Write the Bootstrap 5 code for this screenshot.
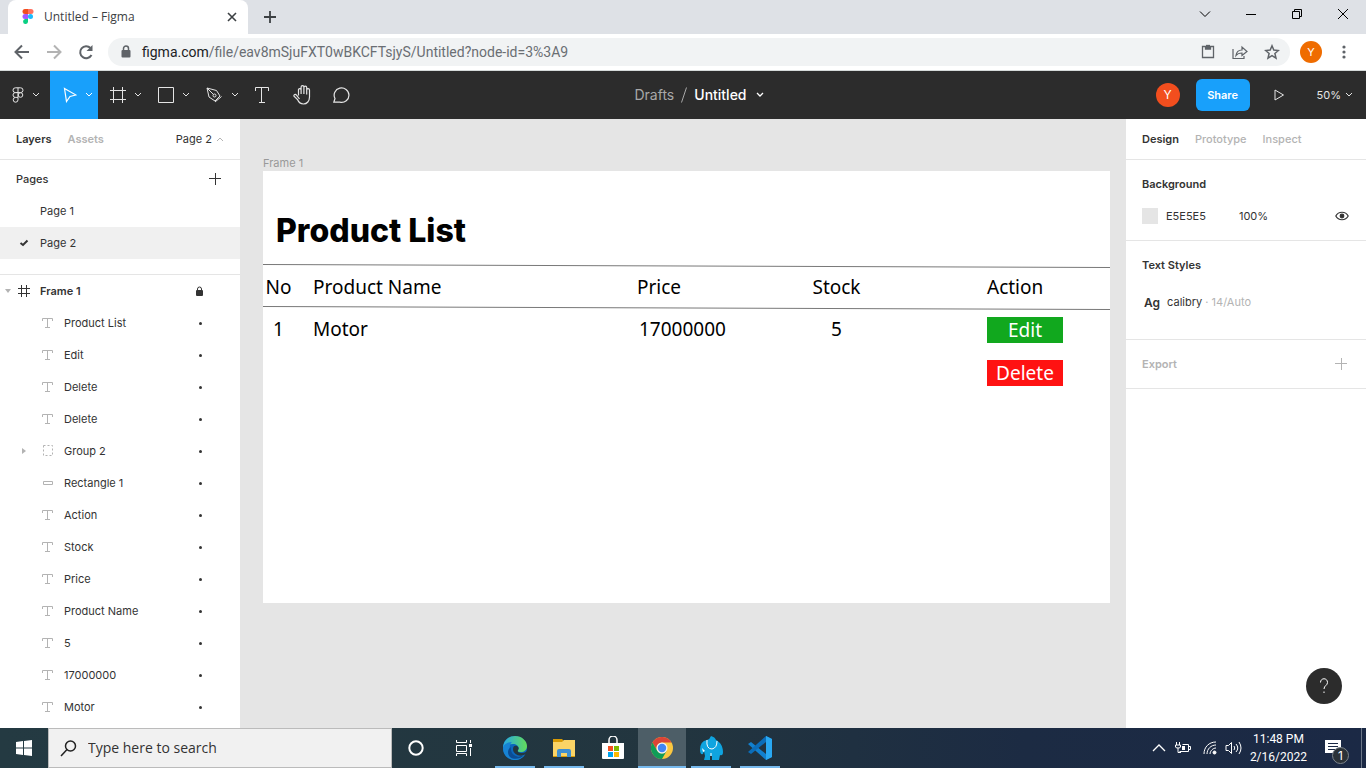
<!DOCTYPE html>
<html lang="en">
<head>
<meta charset="utf-8">
<meta name="viewport" content="width=device-width, initial-scale=1">
<title>Untitled – Figma</title>
<link href="https://cdn.jsdelivr.net/npm/bootstrap@5.3.0/dist/css/bootstrap.min.css" rel="stylesheet">
<style>
  body { font-family: Inter, "Liberation Sans", sans-serif; font-size: 11px; line-height: 16px; color: #333; background: #fff; }
  button { border: 0; background: none; padding: 0; color: inherit; font: inherit; }
  a { color: inherit; text-decoration: none; }
  svg { display: block; flex: none; }
  .ln { fill: none; stroke: currentColor; }

  /* browser chrome */
  .tabstrip { height: 34px; background: #dee1e6; padding-left: 8px; color: #3c4043; font: 12px/16px "Open Sans", "Noto Sans", sans-serif; }
  .browser-tab { width: 240px; height: 34px; background: #fff; border-radius: 8px 8px 0 0; padding: 0 10px 0 14px; gap: 10px; }
  .win-btn { width: 46px; height: 28px; color: #000; }
  .urlbar { height: 37px; border-bottom: 1px solid #d5dad9; color: #5f6368; padding: 0 14px 0 6px; }
  .nav-btn { width: 32px; height: 32px; }
  .omnibox { height: 28px; border-radius: 14px; background: #f1f3f4; padding: 0 10px 0 12px; margin-left: 6px; gap: 10px; }
  .address { font: 14px/20px Roboto, "Noto Sans", sans-serif; outline: 0; color: #6a6e73; }
  .address b { font-weight: 400; color: #202124; }
  .avatar { border-radius: 50%; color: #fff; }
  .avatar-browser { width: 22px; height: 22px; background: #ef6c00; font-size: 11px; margin: 0 10px; }

  /* editor toolbar */
  .toolbar { height: 48px; background: #2c2c2c; color: #e5e5e5; }
  .tool { height: 48px; width: 48px; padding-left: 8px; }
  .tool-wide { width: 50px; padding-left: 2px; }
  .tool-narrow { width: 40px; padding-left: 0; }
  .tool-on { background: #18a0fb; color: #fff; }
  .doc-title { font-size: 14px; line-height: 20px; padding-left: 46px; gap: 7px; }
  .dim { color: #a8a8a8; }
  .tool-end { padding-right: 13px; }
  .share-btn { width: 54px; height: 32px; border-radius: 6px; background: #18a0fb; color: #fff; font-weight: 600; }
  .avatar-editor { width: 24px; height: 24px; background: #f24e1e; font-size: 12px; }

  /* side panels */
  .side { width: 240px; background: #fff; }
  .side-tabs { height: 41px; border-bottom: 1px solid #e5e5e5; padding: 0 16px; gap: 16px; }
  .faint { color: #b3b3b3; }
  .semi { font-weight: 600; }
  .pages-head { height: 35px; padding: 2px 19px 0 16px; }
  .tree-row { height: 32px; }
  .page-name { padding-left: 40px; }
  .page-on { background: #f0f0f0; padding-left: 18px; }
  .page-on .page-name { padding-left: 10px; }
  .pages-block { padding-bottom: 15px; border-bottom: 1px solid #e5e5e5; }
  .layer-row { padding-right: 35px; }
  .layer-row .twisty { width: 40px; padding-left: 21px; }
  .layer-row .kind { width: 24px; color: #b3b3b3; }
  .frame-row .twisty { width: 16px; padding-left: 5px; }
  .frame-row .kind { color: #333; }
  .dot { width: 3px; height: 3px; border-radius: 50%; background: #333; margin-right: 3px; }
  .props { padding: 8px 17px 8px 16px; border-bottom: 1px solid #e5e5e5; }
  .swatch { width: 16px; height: 16px; background: #e5e5e5; }
  .opacity-value { margin-left: 33px; }
  .style-row { padding-top: 13px; height: 50px; gap: 7px; }
  .style-sample { font-size: 12px; line-height: 18px; padding-left: 2px; }
  .help-btn { position: absolute; right: 24px; bottom: 24px; width: 36px; height: 36px; border-radius: 50%; background: #2c2c2c; color: #fff; }

  /* canvas */
  .canvas { background: #e5e5e5; padding: 36px 16px 0 23px; }
  .frame-label { color: #999; }
  .artboard { background: #fff; min-height: 432px; }
  .artboard h1 { font-size: 32px; line-height: 40px; font-weight: 800; color: #000; margin: 0; padding: 40px 13px 13px; }
  .product-table { width: 100%; table-layout: fixed; font: 19px/26px "Noto Sans", sans-serif; color: #000; white-space: nowrap; }
  .product-table th { font-weight: 400; height: 47px; padding: 0 0 2px; }
  .product-table td { padding: 5px 0 0; vertical-align: top; }
  .product-table thead { background: url("data:image/svg+xml,%3Csvg xmlns='http://www.w3.org/2000/svg' viewBox='0 0 848 47' preserveAspectRatio='none'%3E%3Cpath d='M0 .5L848 3.5M0 42.5L848 45.5' stroke='%23777'/%3E%3C/svg%3E") 0 0 / 100% 100% no-repeat; }
  .col-no { width: 50px; } .col-price, .col-stock { width: 175px; } .col-action { width: 123px; }
  .product-table .c-no { text-align: center; padding-right: 19px; }
  .product-table .c-stock { text-align: center; padding-right: 126px; }
  .product-table .c-amount { padding-left: 2px; }
  .product-table .c-action { padding-top: 6px; }
  .actions { gap: 17px; }
  .act-btn { width: 76px; height: 26px; color: #fff; }
  .act-edit { background: #11a81e; } .act-delete { background: #ff1212; }

  /* taskbar */
  .taskbar { height: 40px; background: linear-gradient(90deg, #243a42 0, #22353f 50%, #1c2b43 75%, #1b2945 100%); color: #fff; }
  .task { width: 48px; height: 40px; }
  .task-open { background: linear-gradient(#76b9ed, #76b9ed) 50% 100% / 40px 2px no-repeat; }
  .task-active { background: linear-gradient(#76b9ed, #76b9ed) 50% 100% / 48px 2px no-repeat, #4d5e67; }
  .task-group { gap: 1px; margin-left: 3px; }
  .search-box { width: 344px; height: 40px; background: #f1f1f1; border: 1px solid #bbb; color: #222; padding-left: 11px; gap: 11px; }
  .search-box input { border: 0; background: none; outline: 0; padding: 0; font: 14px/20px "Open Sans", "Noto Sans", sans-serif; color: #333; }
  .search-box input::placeholder { color: #333; opacity: 1; }
  .tray { gap: 8px; padding-right: 4px; }
  .clock { font: 12px/18px Roboto, "Noto Sans", sans-serif; }
  .notice { width: 38px; height: 40px; padding-left: 10px; }
  .count { position: absolute; left: 17px; top: 19px; width: 17px; height: 17px; border-radius: 50%; background: #2b3238; border: 1px solid #7d858c; font-size: 12px; line-height: 15px; }
  .peek { width: 1px; height: 40px; background: #6c7788; }
</style>
</head>
<body class="d-flex flex-column vh-100 overflow-hidden">

<header>
  <div class="tabstrip d-flex align-items-center">
    <div class="browser-tab d-flex align-items-center">
      <svg width="12" height="16" viewBox="0 0 12 16"><path d="M3 0h3v5H3a2.500 2.500 0 0 1 0-5z" fill="#f24e1e"/><path d="M6 0h3a2.500 2.500 0 0 1 0 5H6z" fill="#ff7262"/><path d="M6 5v5H3a2.500 2.500 0 0 1 0-5z" fill="#a259ff"/><circle cx="8.500" cy="7.500" r="2.500" fill="#1abcfe"/><path d="M6 10v3a2.500 2.500 0 1 1-3-3z" fill="#0acf83"/></svg>
      <span class="flex-grow-1">Untitled – Figma</span>
      <button aria-label="Close tab"><svg class="ln" width="12" height="12" stroke-width="1.600"><path d="M2 2l8 8M10 2l-8 8"/></svg></button>
    </div>
    <button class="ms-3" aria-label="New tab"><svg class="ln" width="12" height="12" stroke-width="1.800"><path d="M6 0v12M0 6h12"/></svg></button>
    <div class="ms-auto d-flex align-self-start">
      <button class="win-btn d-grid justify-content-center align-content-center" aria-label="Tab search"><svg class="ln" width="12" height="8"><path d="M1 1.500l5 5 5-5"/></svg></button>
      <button class="win-btn d-grid justify-content-center align-content-center" aria-label="Minimize"><svg class="ln" width="10" height="10"><path d="M0 5.500h10"/></svg></button>
      <button class="win-btn d-grid justify-content-center align-content-center" aria-label="Restore"><svg class="ln" width="10" height="10"><path d="M.5 2.500h7v7h-7zM2.500 2.500v-2h7v7h-2"/></svg></button>
      <button class="win-btn d-grid justify-content-center align-content-center" aria-label="Close"><svg class="ln" width="10" height="10"><path d="M0 0l10 10M10 0L0 10"/></svg></button>
    </div>
  </div>
  <div class="urlbar d-flex align-items-center">
    <button class="nav-btn d-grid justify-content-center align-content-center" aria-label="Back"><svg class="ln" width="16" height="16" stroke-width="2"><path d="M15 8H2M8 1.500L1.500 8 8 14.500"/></svg></button>
    <button class="nav-btn d-grid justify-content-center align-content-center faint" aria-label="Forward"><svg class="ln" width="16" height="16" stroke-width="2"><path d="M1 8h13M8 1.500L14.500 8 8 14.500"/></svg></button>
    <button class="nav-btn d-grid justify-content-center align-content-center" aria-label="Reload"><svg width="16" height="16"><path class="ln" stroke-width="2" d="M13.500 11A6 6 0 1 1 12.500 4"/><path fill="currentColor" d="M14.500 1v6h-6z"/></svg></button>
    <div class="omnibox d-flex align-items-center flex-grow-1">
      <svg width="12" height="14"><rect x="1.500" y="5" width="9" height="7.500" rx="1" fill="currentColor"/><path class="ln" stroke-width="1.500" d="M3.500 5V3.500a2.500 2.500 0 0 1 5 0V5"/></svg>
      <div class="address flex-grow-1" role="textbox" contenteditable="true" aria-label="Address" spellcheck="false"><b>figma.com</b>/file/eav8mSjuFXT0wBKCFTsjyS/Untitled?node-id=3%3A9</div>
      <div class="d-flex align-items-center gap-3">
        <svg class="ln" width="16" height="16" stroke-width="1.300"><path d="M2.500 2.500h11v11h-11z"/><path d="M5.500 2.500V5h5V2.500" fill="currentColor"/><path d="M6 1.500h4"/></svg>
        <svg class="ln" width="16" height="16" stroke-width="1.200"><path d="M1 5v9.500h11V12"/><path d="M4 11.500C4.500 7.500 7 6 10 6V3l5 4.500-5 4V9C7.500 9 5.500 9.500 4 11.500z"/></svg>
        <svg class="ln" width="16" height="16" stroke-width="1.500"><path d="M8 1.800l1.800 4.300 4.600.4-3.500 3 1.100 4.600L8 11.700l-4 2.400 1.100-4.600-3.500-3 4.600-.4z"/></svg>
      </div>
    </div>
    <button class="avatar avatar-browser" aria-label="Profile">Y</button>
    <button class="d-grid justify-content-center ms-1" aria-label="Browser menu"><svg width="16" height="14" fill="currentColor"><circle cx="8" cy="2" r="1.600"/><circle cx="8" cy="7" r="1.600"/><circle cx="8" cy="12" r="1.600"/></svg></button>
  </div>
</header>

<nav class="toolbar d-flex align-items-center flex-shrink-0">
  <div class="d-flex" style="flex:1 1 0">
    <button class="tool tool-wide d-flex align-items-center justify-content-center gap-2" aria-label="Main menu"><svg class="ln" width="12" height="16"><path d="M6 .8H3.400a2.300 2.300 0 0 0 0 4.800H6zM6 .8h2.600a2.300 2.300 0 0 1 0 4.800H6M6 5.600H3.400a2.300 2.300 0 0 0 0 4.800H6zM6 10.400v2.400a2.400 2.400 0 1 1-2.500-2.400"/><circle cx="8.500" cy="8" r="2.300"/></svg><svg class="ln" width="8" height="6"><path d="M1 1l3 3 3-3"/></svg></button>
    <button class="tool tool-on d-flex align-items-center justify-content-center gap-2" aria-label="Move"><svg class="ln" width="14" height="16" stroke-width="1.200"><path d="M1.500 1.500l11.500 6.500-6 1.500-3.500 5z"/></svg><svg class="ln" width="8" height="6"><path d="M1 1l3 3 3-3"/></svg></button>
    <button class="tool d-flex align-items-center justify-content-center gap-1" aria-label="Frame"><svg class="ln" width="16" height="16"><path d="M3.500 0v16M12.500 0v16M0 3.500h16M0 12.500h16"/></svg><svg class="ln ms-1" width="8" height="6"><path d="M1 1l3 3 3-3"/></svg></button>
    <button class="tool d-flex align-items-center justify-content-center gap-1" aria-label="Rectangle"><svg class="ln" width="16" height="16"><path d="M.5.5h15v15H.5z"/></svg><svg class="ln ms-1" width="8" height="6"><path d="M1 1l3 3 3-3"/></svg></button>
    <button class="tool d-flex align-items-center justify-content-center gap-1" aria-label="Pen"><svg class="ln" width="17" height="16"><path d="M1 1l9.500 2.500L14 9l-5 5-6-4zM1 1l6.500 6.500M9 15l6.500-5.500"/><circle cx="8.500" cy="8.500" r="1.500"/></svg><svg class="ln ms-1" width="8" height="6"><path d="M1 1l3 3 3-3"/></svg></button>
    <button class="tool tool-narrow d-grid justify-content-center align-content-center" aria-label="Text"><svg class="ln" width="14" height="16"><path d="M.5 4V.5h13V4M6.500 .5v15M4 15.500h6"/></svg></button>
    <button class="tool tool-narrow d-grid justify-content-center align-content-center" aria-label="Hand"><svg class="ln" width="18" height="20" stroke-width="1.200"><path d="M5.500 10.500V4.500a1.400 1.400 0 0 1 2.600 0V9 2a1.400 1.400 0 0 1 2.800 0v7-6.500a1.400 1.400 0 0 1 2.800 0V9.500 5a1.400 1.400 0 0 1 2.800 0v7c0 4-2.500 7-6 7-4 0-5-2-6-4.500L1 11.200c-.5-1.500 1.500-2.500 2.500-1L6.500 14"/></svg></button>
    <button class="tool tool-narrow d-grid justify-content-center align-content-center" aria-label="Comment"><svg class="ln" width="18" height="16" stroke-width="1.200"><path d="M2 11.500A7.400 7.200 0 1 1 7 15.200H.8z"/></svg></button>
  </div>
  <div class="doc-title d-flex align-items-center"><a href="#" class="dim">Drafts</a><svg class="ln dim" width="6" height="16"><path d="M.5 15.500l5-15"/></svg><button class="d-flex align-items-center gap-2 text-white fw-medium" aria-label="Untitled menu">Untitled<svg class="ln" width="10" height="6" stroke-width="1.300"><path d="M2 1l3 3 3-3"/></svg></button></div>
  <div class="tool-end d-flex align-items-center justify-content-end" style="flex:1 1 0">
    <button class="avatar avatar-editor" aria-label="Account">Y</button>
    <button class="share-btn ms-3">Share</button>
    <button class="mx-4 pe-2" aria-label="Present"><svg class="ln" width="11" height="12"><path d="M1 1l8.500 5L1 11z"/></svg></button>
    <button class="d-flex align-items-center gap-1">50%<svg class="ln" width="8" height="6"><path d="M1 1l3 3 3-3"/></svg></button>
  </div>
</nav>

<main class="d-flex flex-grow-1 overflow-hidden">
  <aside class="side flex-shrink-0 overflow-hidden">
    <div class="side-tabs d-flex align-items-center"><button class="semi">Layers</button><button class="semi faint">Assets</button><button class="ms-auto d-flex align-items-center gap-1">Page 2<svg class="ln faint" width="8" height="6"><path d="M1 5l3-3 3 3"/></svg></button></div>
    <div class="pages-block">
      <div class="pages-head d-flex align-items-center justify-content-between"><span class="fw-medium">Pages</span><button aria-label="Add page"><svg class="ln" width="12" height="12"><path d="M6.500 0v12M0 5.500h12"/></svg></button></div>
      <a href="#" class="tree-row d-flex align-items-center"><span class="page-name">Page 1</span></a>
      <a href="#" class="tree-row page-on d-flex align-items-center"><svg class="ln" width="12" height="10" stroke-width="2"><path d="M2.500 5l2.500 2 4.500-4.500"/></svg><span class="page-name">Page 2</span></a>
    </div>
    <div id="layers">
      <div class="tree-row layer-row frame-row d-flex align-items-center"><span class="twisty"><svg width="6" height="4" fill="#b3b3b3"><path d="M0 0h6L3 4z"/></svg></span><span class="kind"><svg class="ln" width="16" height="12"><path d="M5.500 0v12M10.500 0v12M2 3.500h12M2 8.500h12"/></svg></span><span class="semi">Frame 1</span><svg class="ms-auto" width="10" height="11"><rect x="1" y="4" width="7" height="6" rx="1" fill="currentColor"/><path class="ln" d="M2.500 4V3a2 2 0 0 1 4 0v1"/></svg></div>
    </div>
  </aside>

  <section class="canvas flex-grow-1 overflow-hidden">
    <div class="frame-label">Frame 1</div>
    <div class="artboard">
      <h1>Product List</h1>
      <table class="product-table">
        <colgroup><col class="col-no"><col><col class="col-price"><col class="col-stock"><col class="col-action"></colgroup>
        <thead><tr><th class="c-no">No</th><th>Product Name</th><th>Price</th><th class="c-stock">Stock</th><th>Action</th></tr></thead>
        <tbody><tr><td class="c-no">1</td><td>Motor</td><td class="c-amount">17000000</td><td class="c-stock">5</td>
          <td class="c-action"><div class="actions d-flex flex-column align-items-start"><button class="act-btn act-edit">Edit</button><button class="act-btn act-delete">Delete</button></div></td></tr></tbody>
      </table>
    </div>
  </section>

  <aside class="side flex-shrink-0 position-relative">
    <div class="side-tabs d-flex align-items-center"><button class="semi">Design</button><button class="fw-medium faint">Prototype</button><button class="fw-medium faint">Inspect</button></div>
    <div class="props">
      <div class="tree-row d-flex align-items-center semi">Background</div>
      <div class="tree-row d-flex align-items-center"><span class="swatch me-2"></span><span>E5E5E5</span><span class="opacity-value">100%</span><button class="ms-auto" aria-label="Toggle visibility"><svg class="ln" width="14" height="10" stroke-width="1.200"><path d="M.8 5C3.500 0 10.500 0 13.200 5 10.500 10 3.500 10 .8 5z"/><circle cx="7" cy="5" r="1.800" fill="currentColor"/></svg></button></div>
    </div>
    <div class="props">
      <div class="tree-row d-flex align-items-center semi">Text Styles</div>
      <div class="style-row d-flex align-items-start"><span class="style-sample semi">Ag</span><span>calibry <span class="faint">· 14/Auto</span></span></div>
    </div>
    <div class="props"><div class="tree-row d-flex align-items-center justify-content-between faint semi">Export<button aria-label="Add export"><svg class="ln" width="14" height="12"><path d="M6.500 0v12M0 5.500h12"/></svg></button></div></div>
    <button class="help-btn d-grid justify-content-center align-content-center" aria-label="Help"><svg class="ln" width="10" height="16"><path d="M1.500 4.500C1.500-.5 8.500-.5 8.500 4.500 8.500 7.500 5 7.500 5 11M5 13.500V15"/></svg></button>
  </aside>
</main>

<footer class="taskbar d-flex align-items-center flex-shrink-0">
  <button class="task d-grid justify-content-center align-content-center" aria-label="Start"><svg width="16" height="16" fill="#fff"><path d="M0 2l7-1v6.500H0zM8 .9L16 0v7.500H8zM0 8.500h7V15l-7-1zM8 8.500h8V16l-8-.9z"/></svg></button>
  <label class="search-box d-flex align-items-center"><svg class="ln" width="17" height="17" stroke-width="1.500"><circle cx="10.500" cy="6" r="5"/><path d="M7 9.500L1 16"/></svg><input class="flex-grow-1" type="text" placeholder="Type here to search" aria-label="Type here to search"></label>
  <button class="task d-grid justify-content-center align-content-center" aria-label="Cortana"><svg class="ln" width="16" height="16" stroke-width="2"><circle cx="8" cy="8" r="6.700"/></svg></button>
  <button class="task d-grid justify-content-center align-content-center" aria-label="Task view"><svg class="ln" width="16" height="16"><path d="M.5 0v2.500h10V0M.5 5.500h10v6H.5zM.5 16v-2.500h10V16M14.500 0v3M14.500 8v8"/><path d="M13 4h3v3h-3z" fill="#fff" stroke="none"/></svg></button>
  <div class="task-group d-flex">
    <button class="task task-open d-grid justify-content-center align-content-center" aria-label="Edge"><svg width="24" height="24"><defs><linearGradient id="eg" x2="1"><stop stop-color="#27a9e5"/><stop offset="1" stop-color="#63dc59"/></linearGradient></defs><circle cx="12" cy="12" r="12" fill="#0b66bc"/><path d="M0 12C0 5 5 0 12 0s12 5 12 10c0 4-3 6-6 6-3 0-4-1-3-2 2-3-1-6-5-6-5 0-9 2-10 4z" fill="url(#eg)"/><path d="M0 12c0-3 4-6 9-6-4 3-3 14 5 14 4 0 6-1 8-2-2 4-6 6-10 6C5 24 0 19 0 12z" fill="#1783d3"/><path d="M8 11c-1 7 5 12 13 8-5 6-16 5-16-3 0-2 1-4 3-5z" fill="#0b4c94"/><path d="M10 13c0-3 2-4 4-3 2 1 2 3 1 4-1 2 1 3 4 3 2 0 4-1 5-2v2l-3 2c-5 2-11-1-11-6z" fill="#23363f"/></svg></button>
    <button class="task task-open d-grid justify-content-center align-content-center" aria-label="File Explorer"><svg width="22" height="20"><path d="M0 1h9l2 2h11v16H0z" fill="#d99b05"/><path d="M0 4h9l2-2h11v16H0z" fill="#fbd466"/><path d="M4 19v-6q0-2 2-2h10q2 0 2 2v6h-4v-4H8v4z" fill="#3f8fd0"/></svg></button>
    <button class="task d-grid justify-content-center align-content-center" aria-label="Store"><svg width="24" height="24"><path d="M8 7V4a4 4 0 0 1 8 0v3" class="ln" stroke-width="1.500"/><path d="M1 7h22v15q0 1-1 1H2q-1 0-1-1z" fill="#fff"/><path d="M7 10h5v5H7z" fill="#f25022"/><path d="M13 10h5v5h-5z" fill="#7fba00"/><path d="M7 16h5v5H7z" fill="#00a4ef"/><path d="M13 16h5v5h-5z" fill="#ffb900"/></svg></button>
    <button class="task task-active d-grid justify-content-center align-content-center" aria-label="Chrome"><svg width="22" height="22" viewBox="0 0 24 24"><circle cx="12" cy="12" r="12" fill="#fbc740"/><path d="M1.600 6A12 12 0 0 1 22.400 6H12a6 6 0 0 0-5.200 9z" fill="#db4437"/><path d="M1.600 6l5.200 9a6 6 0 0 0 10.400 0L12 24A12 12 0 0 1 1.600 6z" fill="#0f9d58"/><circle cx="12" cy="12" r="6" fill="#f1f1f1"/><circle cx="12" cy="12" r="4.600" fill="#4285f4"/></svg></button>
    <button class="task task-open d-grid justify-content-center align-content-center" aria-label="HeidiSQL"><svg width="24" height="24"><path d="M8 4q3-1 4-4 4 1 5 4c4 2 7 6 7 12q0 4-3 3l-1 5h-7v-4h-2v4H5l1-4-1-5-1 3Q1 19 1 14 1 5 8 4z" fill="#0fa4e0"/><path d="M8 4q-1 9 5 9 5-1 5-8M12 20v-3" class="ln" stroke="#0785c5"/><path d="M3 12l3 3-2 1z" fill="#fff"/></svg></button>
    <button class="task task-open d-grid justify-content-center align-content-center" aria-label="VS Code"><svg width="24" height="24"><path d="M18 0l6 3v18l-6 3L0 8l3-2 15 12z" fill="#1280cf"/><path d="M18 0v6L3 18l-3-2z" fill="#0b6db9"/><path d="M18 0l6 3v18l-6 3z" fill="#29a8f2"/></svg></button>
  </div>
  <div class="tray ms-auto d-flex align-items-center">
    <svg class="ln" width="14" height="8" stroke-width="1.300"><path d="M1 7l6-6 6 6"/></svg>
    <svg class="ln" width="17" height="12"><path d="M8.500 2.500h6v7h-9M15 4.500h1.500v3H15M2.500 0v3M5.500 0v3M1.500 3v2q0 1 2.500 1t2.500-1V3zM4 6v4.500h3"/><path d="M8 4h3v4H8z" fill="currentColor" stroke="none"/></svg>
    <svg class="ln ms-1" width="14" height="14"><path d="M1 13C1 6 6 1 13 1M4 13c0-5 4-9 9-9M7 13c0-3 3-6 6-6"/><circle cx="11.500" cy="11.500" r="1.500" fill="currentColor"/></svg>
    <svg class="ln" width="17" height="14"><path d="M1 4.500h2.500l3-3v11l-3-3H1zM9 5q1.500 2 0 4M11 3q3.500 4 0 8M14 1q4 6 0 12"/></svg>
    <div class="clock text-center">11:48 PM<br>2/16/2022</div>
    <button class="notice position-relative" aria-label="Notifications"><svg width="16" height="16"><path d="M0 0h16v13h-5l-3 3v-3H0z" fill="#fff"/><path d="M3 3.500h10M3 6.500h10M3 9.500h10" stroke="#1b2945"/></svg><span class="count">1</span></button>
    <span class="peek"></span>
  </div>
</footer>

<template id="layer-template">
  <div class="tree-row layer-row d-flex align-items-center"><span class="twisty"></span><span class="kind"></span><span class="layer-name"></span><span class="dot ms-auto"></span></div>
</template>
<script src="https://cdn.jsdelivr.net/npm/bootstrap@5.3.0/dist/js/bootstrap.bundle.min.js"></script>
<script>
  const icons = {
    text: '<svg class="ln" width="16" height="12"><path d="M2.500 4V1.500h10V4M7.500 1.500v9M5 10.500h5"/></svg>',
    group: '<svg class="ln" width="16" height="12"><path d="M3.500.5h9v10h-9z" stroke-dasharray="2 2"/></svg>',
    rect: '<svg class="ln" width="16" height="12"><path d="M3.500 4.500h9v3h-9z"/></svg>'
  };
  const layers = ['Product List', 'Edit', 'Delete', 'Delete', 'Group 2', 'Rectangle 1', 'Action', 'Stock', 'Price', 'Product Name', '5', '17000000', 'Motor'];
  const template = document.getElementById('layer-template');
  for (const name of layers) {
    const row = template.content.cloneNode(true);
    const type = name.startsWith('Group') ? 'group' : name.startsWith('Rectangle') ? 'rect' : 'text';
    row.querySelector('.kind').innerHTML = icons[type];
    row.querySelector('.layer-name').textContent = name;
    if (type === 'group') row.querySelector('.twisty').innerHTML = '<svg width="5" height="6" fill="#b3b3b3"><path d="M1 0v6l4-3z"/></svg>';
    document.getElementById('layers').append(row);
  }
</script>
</body>
</html>
